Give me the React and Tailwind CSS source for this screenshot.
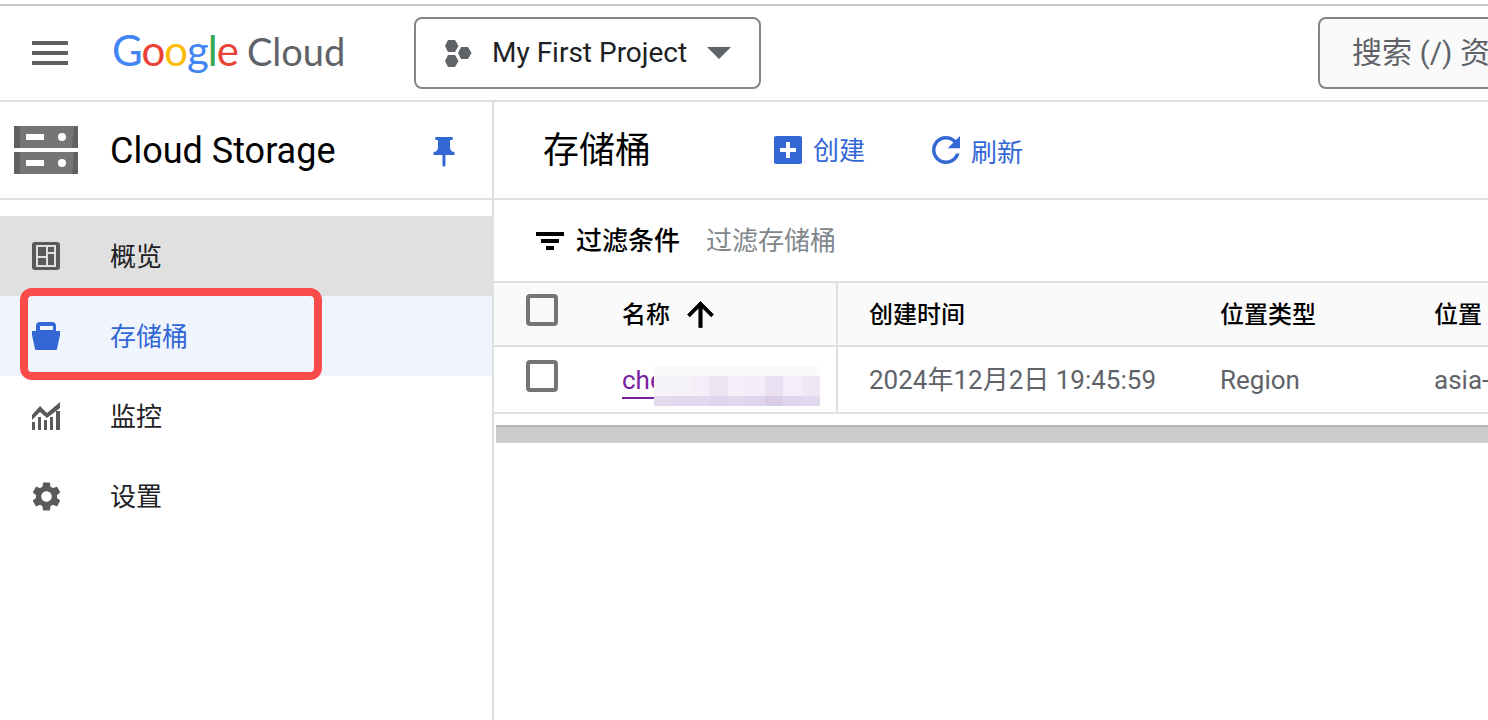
const BLUE = "#3367d6";

const FONT = "font-['Roboto','Noto_Sans_CJK_SC',sans-serif]";

const MenuIcon = () => (
  <svg className="shrink-0" width="48" height="48" viewBox="0 0 24 24" fill="#5f5f5f">
    <path d="M3 18h18v-2H3v2zm0-5h18v-2H3v2zm0-7v2h18V6H3z" />
  </svg>
);

const ProjectIcon = () => (
  <svg className="shrink-0" width="28" height="28" viewBox="0 0 28 28" fill="#5f6368">
    <polygon points="2,1 9,1 12.5,7 9,13 2,13 -1,7" transform="translate(2 0)" />
    <polygon points="2,1 9,1 12.5,7 9,13 2,13 -1,7" transform="translate(2 15)" />
    <polygon points="2,1 9,1 12.5,7 9,13 2,13 -1,7" transform="translate(15 7)" />
  </svg>
);

const StorageLogo = () => (
  <svg className="shrink-0" width="64" height="48" viewBox="0 0 64 48">
    {[0, 26].map((y) => (
      <g key={y}>
        <rect x="0" y={y} width="64" height="22" fill="#757575" />
        <rect x="0" y={y} width="6" height="22" fill="#616161" />
        <polygon points={`60,${y} 64,${y} 64,${y + 22} 58,${y + 22}`} fill="#616161" />
        <rect x="12" y={y + 8} width="18" height="6" fill="#fff" />
        <circle cx="48" cy={y + 11} r="4" fill="#fff" />
      </g>
    ))}
  </svg>
);

const PinIcon = () => (
  <svg className="shrink-0" width="36" height="36" viewBox="0 0 24 24" fill={BLUE}>
    <path d="M16 9V4h1c.55 0 1-.45 1-1s-.45-1-1-1H7c-.55 0-1 .45-1 1s.45 1 1 1h1v5c0 1.66-1.34 3-3 3v2h5.97v7l1 1 1-1v-7H19v-2c-1.66 0-3-1.34-3-3z" />
  </svg>
);

const OverviewIcon = () => (
  <svg className="shrink-0" width="28" height="28" viewBox="0 0 28 28">
    <rect width="28" height="28" rx="3" fill="#5a5a5a" />
    <rect x="4" y="3" width="20" height="22" fill="#e0e0e0" />
    <rect x="6" y="5" width="8" height="9" fill="#5a5a5a" />
    <rect x="6" y="16" width="8" height="7" fill="#5a5a5a" />
    <rect x="16" y="5" width="6" height="5" fill="#5a5a5a" />
    <rect x="16" y="12" width="6" height="11" fill="#5a5a5a" />
  </svg>
);

const BucketIcon = () => (
  <svg className="shrink-0" width="28" height="28" viewBox="0 0 28 28" fill={BLUE}>
    <path
      fillRule="evenodd"
      d="M8 0h12a4 4 0 0 1 4 4v5H4V4a4 4 0 0 1 4-4zM8 4v4h13V4z"
    />
    <path d="M0 9h28v4l-3 14q-.2 1-1 1H4q-.8 0-1-1L0 13z" />
  </svg>
);

const MonitoringIcon = () => (
  <svg className="shrink-0" width="28" height="28" viewBox="0 0 28 28" fill="#5a5a5a">
    <path d="M0 13 8 4l7 7L28 0v6L15 16 8 10l-8 8z" />
    <rect x="0" y="20" width="3" height="8" />
    <rect x="6" y="15" width="3" height="13" />
    <rect x="12" y="18" width="3" height="10" />
    <rect x="18" y="15" width="3" height="13" />
    <rect x="24" y="9" width="4" height="19" />
  </svg>
);

const GearIcon = () => (
  <svg className="shrink-0" width="35" height="35" viewBox="0 0 24 24" fill="#5a5a5a">
    <path d="M19.14 12.94c.04-.3.06-.61.06-.94 0-.32-.02-.64-.07-.94l2.03-1.58c.18-.14.23-.41.12-.61l-1.92-3.32c-.12-.22-.37-.29-.59-.22l-2.39.96c-.5-.38-1.03-.7-1.62-.94l-.36-2.54c-.04-.24-.24-.41-.48-.41h-3.84c-.24 0-.43.17-.47.41l-.36 2.54c-.59.24-1.13.57-1.62.94l-2.39-.96c-.22-.08-.47 0-.59.22L2.74 8.87c-.12.21-.08.47.12.61l2.03 1.58c-.05.3-.09.63-.09.94s.02.64.07.94l-2.03 1.58c-.18.14-.23.41-.12.61l1.92 3.32c.12.22.37.29.59.22l2.39-.96c.5.38 1.03.7 1.62.94l.36 2.54c.05.24.24.41.48.41h3.84c.24 0 .44-.17.47-.41l.36-2.54c.59-.24 1.13-.56 1.62-.94l2.39.96c.22.08.47 0 .59-.22l1.92-3.32c.12-.22.07-.47-.12-.61l-2.01-1.58zM12 15.6c-1.98 0-3.6-1.62-3.6-3.6s1.62-3.6 3.6-3.6 3.6 1.62 3.6 3.6-1.62 3.6-3.6 3.6z" />
  </svg>
);

const PlusIcon = () => (
  <svg className="shrink-0" width="28" height="28" viewBox="0 0 28 28">
    <rect width="28" height="28" rx="2" fill={BLUE} />
    <path d="M12 6h4v6h6v4h-6v6h-4v-6H6v-4h6z" fill="#fff" />
  </svg>
);

const RefreshIcon = () => (
  <svg className="shrink-0" width="42" height="42" viewBox="0 0 24 24" fill={BLUE}>
    <path d="M17.65 6.35C16.2 4.9 14.21 4 12 4c-4.42 0-7.99 3.58-7.99 8s3.57 8 7.99 8c3.73 0 6.84-2.55 7.73-6h-2.08c-.82 2.33-3.04 4-5.65 4-3.31 0-6-2.69-6-6s2.69-6 6-6c1.66 0 3.14.69 4.22 1.78L13 11h7V4l-2.35 2.35z" />
  </svg>
);

const FilterIcon = () => (
  <svg className="shrink-0" width="28" height="18" viewBox="0 0 28 18" fill="#000">
    <rect x="0" y="0" width="28" height="4" />
    <rect x="5" y="7" width="18" height="4" />
    <rect x="10" y="14" width="8" height="4" />
  </svg>
);

const ArrowUp = () => (
  <svg className="shrink-0" width="39" height="39" viewBox="0 0 24 24" fill="#000" stroke="#000" strokeWidth="0.5">
    <path d="M4 12l1.41 1.41L11 7.83V20h2V7.83l5.58 5.59L20 12l-8-8-8 8z" />
  </svg>
);

const navItems = [
  { label: "概览", icon: <OverviewIcon />, rowClass: "bg-[#e0e0e0] text-[#202124]" },
  { label: "存储桶", icon: <BucketIcon />, rowClass: "bg-[#f0f5fd] text-[#3367d6]" },
  { label: "监控", icon: <MonitoringIcon />, rowClass: "text-[#202124]" },
  { label: "设置", icon: <GearIcon />, rowClass: "text-[#202124]" },
];

// pixelated smear that hides the bucket name
const blurTop = ["#f7f4f9", "#f5f1f8", "#f3eef7", "#ece5f3", "#f3eef7", "#f2edf6", "#e9e0f1", "#f3eef7", "#efe8f4"];
const blurBottom = ["#e4daee", "#e2d7ed", "#e3d9ee", "#e0d5ec", "#e3d9ee", "#e0d5ec", "#dbcde8", "#e0d5ec", "#e3d9ee"];

const Checkbox = () => (
  <div className="w-8 h-8 border-4 border-[#757575] rounded" />
);

const App = () => {
  return (
    <div className={`relative w-[1488px] h-[720px] overflow-hidden bg-white ${FONT}`}>
      <div className="h-1 bg-white" />
      <div className="h-[2px] bg-[#cccccc]" />

      {/* Top bar */}
      <div className="flex items-center h-[96px] pl-[26px] border-b-2 border-[#e0e0e0] overflow-hidden">
        <MenuIcon />
        <div className="ml-[38px] -mt-[6px] w-[302px] shrink-0 flex items-baseline font-['Lato','Roboto',sans-serif] leading-none">
          <span className="text-[42px] tracking-[-1px]">
            <span className="text-[#4285f4]">G</span>
            <span className="text-[#ea4335]">o</span>
            <span className="text-[#fbbc05]">o</span>
            <span className="text-[#4285f4]">g</span>
            <span className="text-[#34a853]">l</span>
            <span className="text-[#ea4335]">e</span>
          </span>
          <span className="ml-[9px] text-[38px] text-[#5f6368]">Cloud</span>
        </div>
        <div className="flex items-center w-[347px] h-[72px] shrink-0 border-2 border-[#80868b] rounded-lg pl-[28px]">
          <ProjectIcon />
          <span className="ml-[20px] text-[28px] text-[#202124]">My First Project</span>
          <svg className="ml-[20px] shrink-0" width="24" height="12" viewBox="0 0 24 12" fill="#5f6368">
            <path d="M0 0h24L12 12z" />
          </svg>
        </div>
        <div className="flex items-center ml-[557px] w-[300px] h-[72px] shrink-0 border-2 border-[#80868b] rounded-lg bg-[#fafafa] pl-[32px] pb-[2px] text-[30px] text-[#5f6368] whitespace-nowrap overflow-hidden">
          搜索 (/) 资
        </div>
      </div>

      <div className="flex h-[618px]">
        {/* Sidebar */}
        <div className="w-[494px] shrink-0 border-r-2 border-[#e0e0e0]">
          <div className="flex items-center h-[98px] pl-[14px] border-b-2 border-[#e0e0e0]">
            <StorageLogo />
            <span className="ml-[32px] mt-[2px] text-[36px] text-black">Cloud Storage</span>
            <div className="ml-[90px] mt-[4px]">
              <PinIcon />
            </div>
          </div>
          <div className="pt-4">
            {navItems.map((item) => (
              <div key={item.label} className={`flex items-center h-20 ${item.rowClass}`}>
                <div className="w-[110px] shrink-0 pl-[32px]">
                  <div className="w-7 h-7 flex items-center justify-center">{item.icon}</div>
                </div>
                <span className="mt-[2px] text-[26px]">{item.label}</span>
              </div>
            ))}
          </div>
        </div>

        {/* Main */}
        <div className="flex-1 min-w-0">
          <div className="flex items-center h-[98px] pl-[48px] border-b-2 border-[#e0e0e0]">
            <h1 className="w-[232px] pl-[1px] mt-[2px] text-[36px] text-black">存储桶</h1>
            <div className="flex items-center text-[26px] text-[#3367d6]">
              <PlusIcon />
              <span className="ml-[11px] mt-[2px]">创建</span>
            </div>
            <div className="flex items-center ml-[67px] text-[26px] text-[#3367d6]">
              <div className="w-7 h-7 flex items-center justify-center">
                <RefreshIcon />
              </div>
              <span className="ml-[11px] mt-[6px]">刷新</span>
            </div>
          </div>

          <div className="flex items-center h-[81px] pl-[42px]">
            <FilterIcon />
            <span className="ml-[12px] mt-[2px] text-[26px] font-medium text-black">过滤条件</span>
            <span className="ml-[26px] mt-[2px] text-[26px] text-[#80868b]">过滤存储桶</span>
          </div>

          {/* Table */}
          <div className="border-t-2 border-[#e0e0e0]">
            <div className="grid grid-cols-[344px_382px_214px_1fr] h-[64px] items-center bg-[#fafafa] border-b-2 border-[#e0e0e0] text-[24px] text-black font-medium overflow-hidden">
              <div className="flex items-center h-full pl-8 border-r-2 border-[#e0e0e0]">
                <div className="-mt-[8px]"><Checkbox /></div>
                <span className="ml-[64px] mt-[2px] whitespace-nowrap">名称</span>
                <div className="ml-[18px] w-6 h-6 flex items-center justify-center"><ArrowUp /></div>
              </div>
              <span className="pl-[31px] mt-[2px]">创建时间</span>
              <span className="mt-[2px] whitespace-nowrap">位置类型</span>
              <span className="mt-[2px] whitespace-nowrap">位置</span>
            </div>
            <div className="grid grid-cols-[344px_382px_214px_1fr] h-[67px] items-center border-b-2 border-[#e0e0e0] text-[26px] text-[#5f6368] overflow-hidden">
              <div className="flex items-center h-full pl-8 border-r-2 border-[#e0e0e0] overflow-hidden">
                <div className="-mt-[7px] shrink-0"><Checkbox /></div>
                <span className="ml-[64px] mt-[1px] text-[#7b1fa2] underline underline-offset-[8px] decoration-2 whitespace-nowrap">che</span>
              </div>
              <span className="pl-[31px] mt-[1px] whitespace-nowrap">2024年12月2日 19:45:59</span>
              <span className="mt-[1px]">Region</span>
              <span className="mt-[1px] whitespace-nowrap">asia-</span>
            </div>
          </div>

          {/* Horizontal scrollbar */}
          <div className="mt-[11px] ml-[2px] h-[18px] bg-[#cccccc] border-t-2 border-[#b5b5b5]" />
        </div>
      </div>

      {/* Blurred name */}
      <div className="absolute left-[654px] top-[366px] w-[166px] h-10 flex flex-col">
        <div className="h-[10px] bg-[#faf9fb]" />
        <div className="flex h-[20px]">
          {blurTop.map((c, i) => (
            <div key={i} className="flex-1" style={{ backgroundColor: c }} />
          ))}
        </div>
        <div className="flex h-[10px]">
          {blurBottom.map((c, i) => (
            <div key={i} className="flex-1" style={{ backgroundColor: c }} />
          ))}
        </div>
      </div>

      {/* Red annotation box */}
      <div className="absolute left-5 top-[288px] w-[302px] h-[92px] border-8 border-[#f94c4a] rounded-[12px]" />
    </div>
  );
};

export default App;
